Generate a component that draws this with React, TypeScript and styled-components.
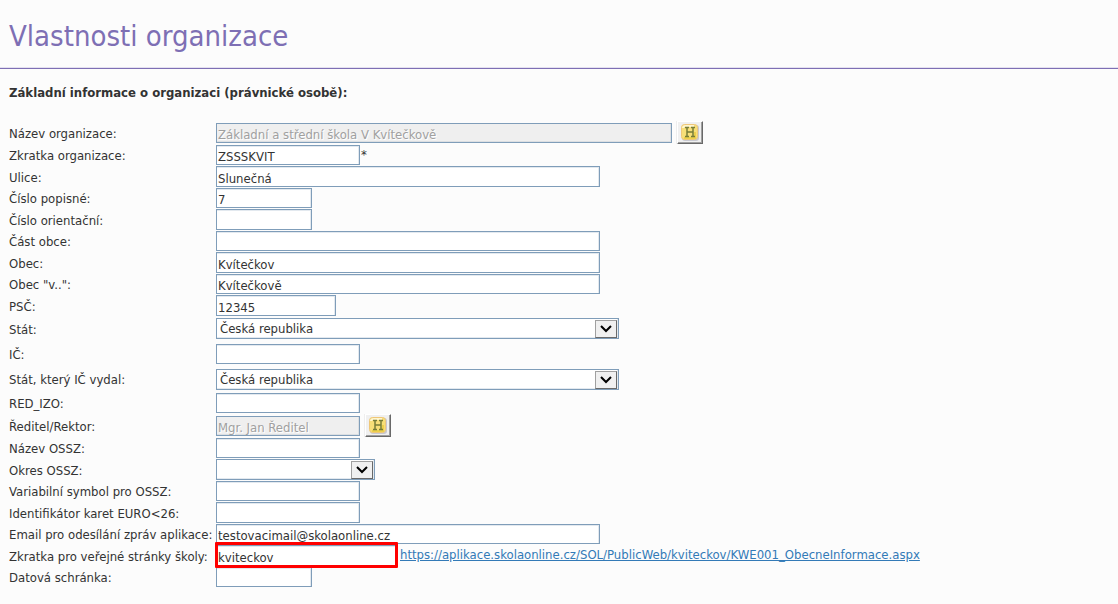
import React from "react";
import styled, { createGlobalStyle } from "styled-components";

const GlobalStyle = createGlobalStyle`
  * { box-sizing: border-box; }
  body {
    margin: 0;
    background: #fcfcfc;
    color: #333;
    font-family: "DejaVu Sans Condensed", Tahoma, sans-serif;
    font-size: 13px;
    line-height: 16px;
  }
`;

const Header = styled.header`
  padding: 16px 9px 12px;
  border-bottom: 1px solid #7e6fb4;
  box-shadow: inset 0 -1px #e4e1f0;
`;

const Title = styled.h1`
  margin: 0;
  color: #7e6fb4;
  font-size: 29px;
  font-weight: 400;
  line-height: 40px;
`;

const Form = styled.form`
  padding: 16px 9px;
`;

const SectionTitle = styled.h2`
  margin: 0 0 20px;
  font-size: 13px;
  line-height: 16px;
`;

const Row = styled.div<{ $height: number }>`
  display: grid;
  grid-template-columns: 207px 1fr;
  align-items: center;
  height: ${(p) => p.$height}px;
`;

const Label = styled.label`
  padding-top: 2px;
  white-space: nowrap;
`;

const Controls = styled.div`
  display: flex;
  align-items: center;
`;

const TextInput = styled.input<{ $width: number; $tall?: boolean }>`
  width: ${(p) => p.$width}px;
  height: ${(p) => (p.$tall ? 21 : 20)}px;
  padding: 3px 1px 0;
  border: 1px solid #7f9db9;
  border-radius: 0;
  box-shadow: inset -1px 1px #e3e9ef;
  background: #fff;
  color: #333;
  font: inherit;

  &:disabled {
    background: #efefef;
    box-shadow: inset -1px -1px #dcdfe2;
    color: #a0a0a0;
    text-shadow: 1px 1px #fff;
  }
`;

const Highlight = styled.span`
  position: relative;
  display: flex;
  margin-right: 3px;

  &::after {
    content: "";
    position: absolute;
    inset: -3px -1px -2px;
    border: 3px solid #ff0000;
    border-radius: 1px;
    pointer-events: none;
  }
`;

const SelectBox = styled.span<{ $width: number }>`
  position: relative;
  display: flex;
  width: ${(p) => p.$width}px;
`;

const Select = styled.select`
  appearance: none;
  width: 100%;
  height: 21px;
  padding: 1px 24px 0 3px;
  border: 1px solid #7f9db9;
  border-radius: 0;
  box-shadow: inset -1px -1px #e3e9ef;
  background: #fff;
  color: #333;
  font: inherit;
`;

const SelectArrow = styled.span`
  position: absolute;
  top: 2px;
  right: 2px;
  display: grid;
  place-items: center;
  width: 22px;
  height: 18px;
  border: 1px solid #a0a0a0;
  border-right-color: #696969;
  border-bottom-color: #696969;
  background: #f0f0f0;
  pointer-events: none;
`;

const HistoryButton = styled.button`
  display: grid;
  place-items: center;
  width: 26px;
  height: 23px;
  margin-left: 5px;
  padding: 0;
  border: 1px solid;
  border-color: #fff #696969 #696969 #fff;
  box-shadow: inset -1px -1px #a0a0a0, -1px 0 #eee;
  background: #f0f0f0;
`;

const Required = styled.span`
  padding-left: 1px;
`;

const Link = styled.a`
  padding-bottom: 1px;
  color: #337ab7;
`;

const HistoryIcon = () => (
  <svg width="18" height="17" viewBox="0 0 18 17" aria-hidden="true">
    <rect x="1" y="1" width="17" height="16" rx="3" fill="#c7c8d0" />
    <rect x="0.5" y="0.5" width="16" height="15" rx="3" fill="#f7df78" stroke="#efc778" />
    <path d="M2 4Q2 2 5 2H13" fill="none" stroke="#fff6cf" strokeWidth="2" />
    <path d="M3 14H14V8" fill="none" stroke="#ecd04c" strokeWidth="2" />
    <path
      d="M4 3.5H8M10 3.5H14M4 12.5H8M10 12.5H14M6 3V13M12 3V13M6 8H12"
      fill="none"
      stroke="#777d37"
      strokeWidth="1.5"
    />
  </svg>
);

const Chevron = () => (
  <svg width="12" height="8" viewBox="0 0 12 8" aria-hidden="true">
    <path d="M1 1L6 6L11 1" fill="none" stroke="#000" strokeWidth="2" />
  </svg>
);

type Field = {
  id: string;
  label: string;
  height: number;
  width: number;
  value?: string;
  kind?: "select";
  disabled?: boolean;
  required?: boolean;
  link?: string;
};

const fields: Field[] = [
  { id: "nazev", label: "Název organizace:", height: 23, width: 456, value: "Základní a střední škola V Kvítečkově", disabled: true },
  { id: "zkratka", label: "Zkratka organizace:", height: 22, width: 144, value: "ZSSSKVIT", required: true },
  { id: "ulice", label: "Ulice:", height: 21, width: 384, value: "Slunečná" },
  { id: "popisne", label: "Číslo popisné:", height: 22, width: 96, value: "7" },
  { id: "orientacni", label: "Číslo orientační:", height: 21, width: 96 },
  { id: "cast", label: "Část obce:", height: 22, width: 384 },
  { id: "obec", label: "Obec:", height: 21, width: 384, value: "Kvítečkov" },
  { id: "obecv", label: 'Obec "v..":', height: 22, width: 384, value: "Kvítečkově" },
  { id: "psc", label: "PSČ:", height: 21, width: 120, value: "12345" },
  { id: "stat", label: "Stát:", height: 25, width: 403, value: "Česká republika", kind: "select" },
  { id: "ic", label: "IČ:", height: 26, width: 144 },
  { id: "static", label: "Stát, který IČ vydal:", height: 24, width: 403, value: "Česká republika", kind: "select" },
  { id: "redizo", label: "RED_IZO:", height: 23, width: 144 },
  { id: "reditel", label: "Ředitel/Rektor:", height: 23, width: 144, value: "Mgr. Jan Ředitel", disabled: true },
  { id: "ossz", label: "Název OSSZ:", height: 22, width: 144 },
  { id: "okres", label: "Okres OSSZ:", height: 21, width: 159, value: "", kind: "select" },
  { id: "symbol", label: "Variabilní symbol pro OSSZ:", height: 22, width: 144 },
  { id: "euro", label: "Identifikátor karet EURO<26:", height: 21, width: 144 },
  { id: "email", label: "Email pro odesílání zpráv aplikace:", height: 22, width: 384, value: "testovacimail@skolaonline.cz" },
  {
    id: "web",
    label: "Zkratka pro veřejné stránky školy:",
    height: 21,
    width: 181,
    value: "kviteckov",
    link: "https://aplikace.skolaonline.cz/SOL/PublicWeb/kviteckov/KWE001_ObecneInformace.aspx",
  },
  { id: "schranka", label: "Datová schránka:", height: 22, width: 96 },
];

const Control = ({ field }: { field: Field }) => {
  if (field.kind === "select") {
    return (
      <SelectBox $width={field.width}>
        <Select id={field.id} defaultValue={field.value}>
          <option value={field.value}>{field.value}</option>
        </Select>
        <SelectArrow>
          <Chevron />
        </SelectArrow>
      </SelectBox>
    );
  }
  const input = (
    <TextInput
      id={field.id}
      type="text"
      $width={field.width}
      $tall={field.height === 21}
      defaultValue={field.value}
      disabled={field.disabled}
      required={field.required}
    />
  );
  return field.link ? <Highlight>{input}</Highlight> : input;
};

export default function App() {
  return (
    <>
      <GlobalStyle />
      <Header>
        <Title>Vlastnosti organizace</Title>
      </Header>
      <Form>
        <SectionTitle>Základní informace o organizaci (právnické osobě):</SectionTitle>
        {fields.map((field) => (
          <Row key={field.id} $height={field.height}>
            <Label htmlFor={field.id}>{field.label}</Label>
            <Controls>
              <Control field={field} />
              {field.required && <Required>*</Required>}
              {field.disabled && (
                <HistoryButton type="button" aria-label="Historie">
                  <HistoryIcon />
                </HistoryButton>
              )}
              {field.link && <Link href={field.link}>{field.link}</Link>}
            </Controls>
          </Row>
        ))}
      </Form>
    </>
  );
}
